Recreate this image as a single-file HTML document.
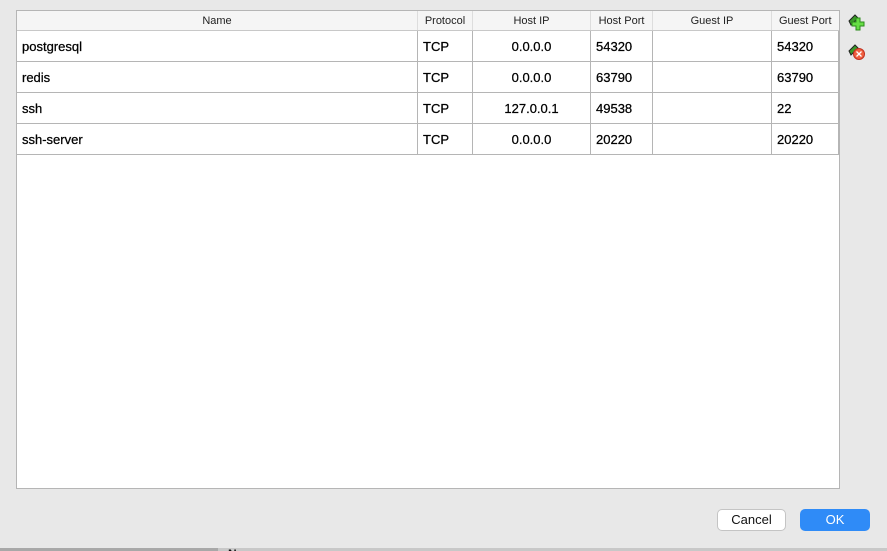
<!DOCTYPE html>
<html><head><style>
body{margin:0;width:887px;height:551px;background:#e8e8e8;font-family:"Liberation Sans",sans-serif;position:relative;overflow:hidden}
.box{position:absolute;left:16px;top:10px;width:822px;height:477px;background:#fff;border:1px solid #b5b5b5}
table{border-collapse:collapse;position:absolute;left:0;top:0;width:822px}
th{height:19px;font-size:11px;font-weight:normal;color:#222;background:#f5f5f5;border-left:1px solid #ddd;border-bottom:1px solid #c8c8c8;padding:0}
th:first-child{border-left:none}
td{height:30px;font-size:13px;color:#000;border:1px solid #b5b5b5;padding:0 0 0 5px;-webkit-text-stroke:0.25px #000}
td:first-child{border-left:none}
td.c{text-align:center;padding:0}
.btn{position:absolute;top:509px;height:20px;border-radius:5px;font-size:13px;text-align:center;line-height:20px}
</style></head><body>
<div class="box"><table>
<tr><th style="width:400px">Name</th><th style="width:54px">Protocol</th><th style="width:117px">Host IP</th><th style="width:61px">Host Port</th><th style="width:118px">Guest IP</th><th>Guest Port</th></tr>
<tr><td>postgresql</td><td>TCP</td><td class="c">0.0.0.0</td><td>54320</td><td></td><td>54320</td></tr>
<tr><td>redis</td><td>TCP</td><td class="c">0.0.0.0</td><td>63790</td><td></td><td>63790</td></tr>
<tr><td>ssh</td><td>TCP</td><td class="c">127.0.0.1</td><td>49538</td><td></td><td>22</td></tr>
<tr><td>ssh-server</td><td>TCP</td><td class="c">0.0.0.0</td><td>20220</td><td></td><td>20220</td></tr>
</table></div>
<svg style="position:absolute;left:847px;top:12px" width="20" height="20" viewBox="0 0 20 20">
<path d="M2 9 L8 3 L11 6 L4 13 Z" fill="#3a9a2a" stroke="#222" stroke-width="1"/>
<path d="M9 6h4v4h4v4h-4v4h-4v-4H5v-4h4z" fill="#66dd44" stroke="#2a8a1a" stroke-width="1"/></svg>
<svg style="position:absolute;left:847px;top:42px" width="20" height="20" viewBox="0 0 20 20">
<path d="M2 9 L8 3 L11 6 L4 13 Z" fill="#3a9a2a" stroke="#222" stroke-width="1"/>
<circle cx="12" cy="12" r="5.5" fill="#f06040" stroke="#c03020"/>
<path d="M9.5 9.5l5 5M14.5 9.5l-5 5" stroke="#fff" stroke-width="1.3"/></svg>
<div class="btn" style="left:717px;width:67px;background:#fff;border:1px solid #c4c4c4;color:#111">Cancel</div>
<div class="btn" style="left:800px;width:70px;height:22px;line-height:22px;background:#2f8bf7;color:#fff;border-radius:5px">OK</div>
<div style="position:absolute;left:0;top:548px;width:218px;height:3px;background:#a8a8a8"></div>
<div style="position:absolute;left:218px;top:548px;width:669px;height:3px;background:#c8c8c8"></div>
<div style="position:absolute;left:228px;top:548px;font-size:12px;color:#111;font-weight:bold;line-height:12px;height:3px;overflow:hidden">None</div>
</body></html>
